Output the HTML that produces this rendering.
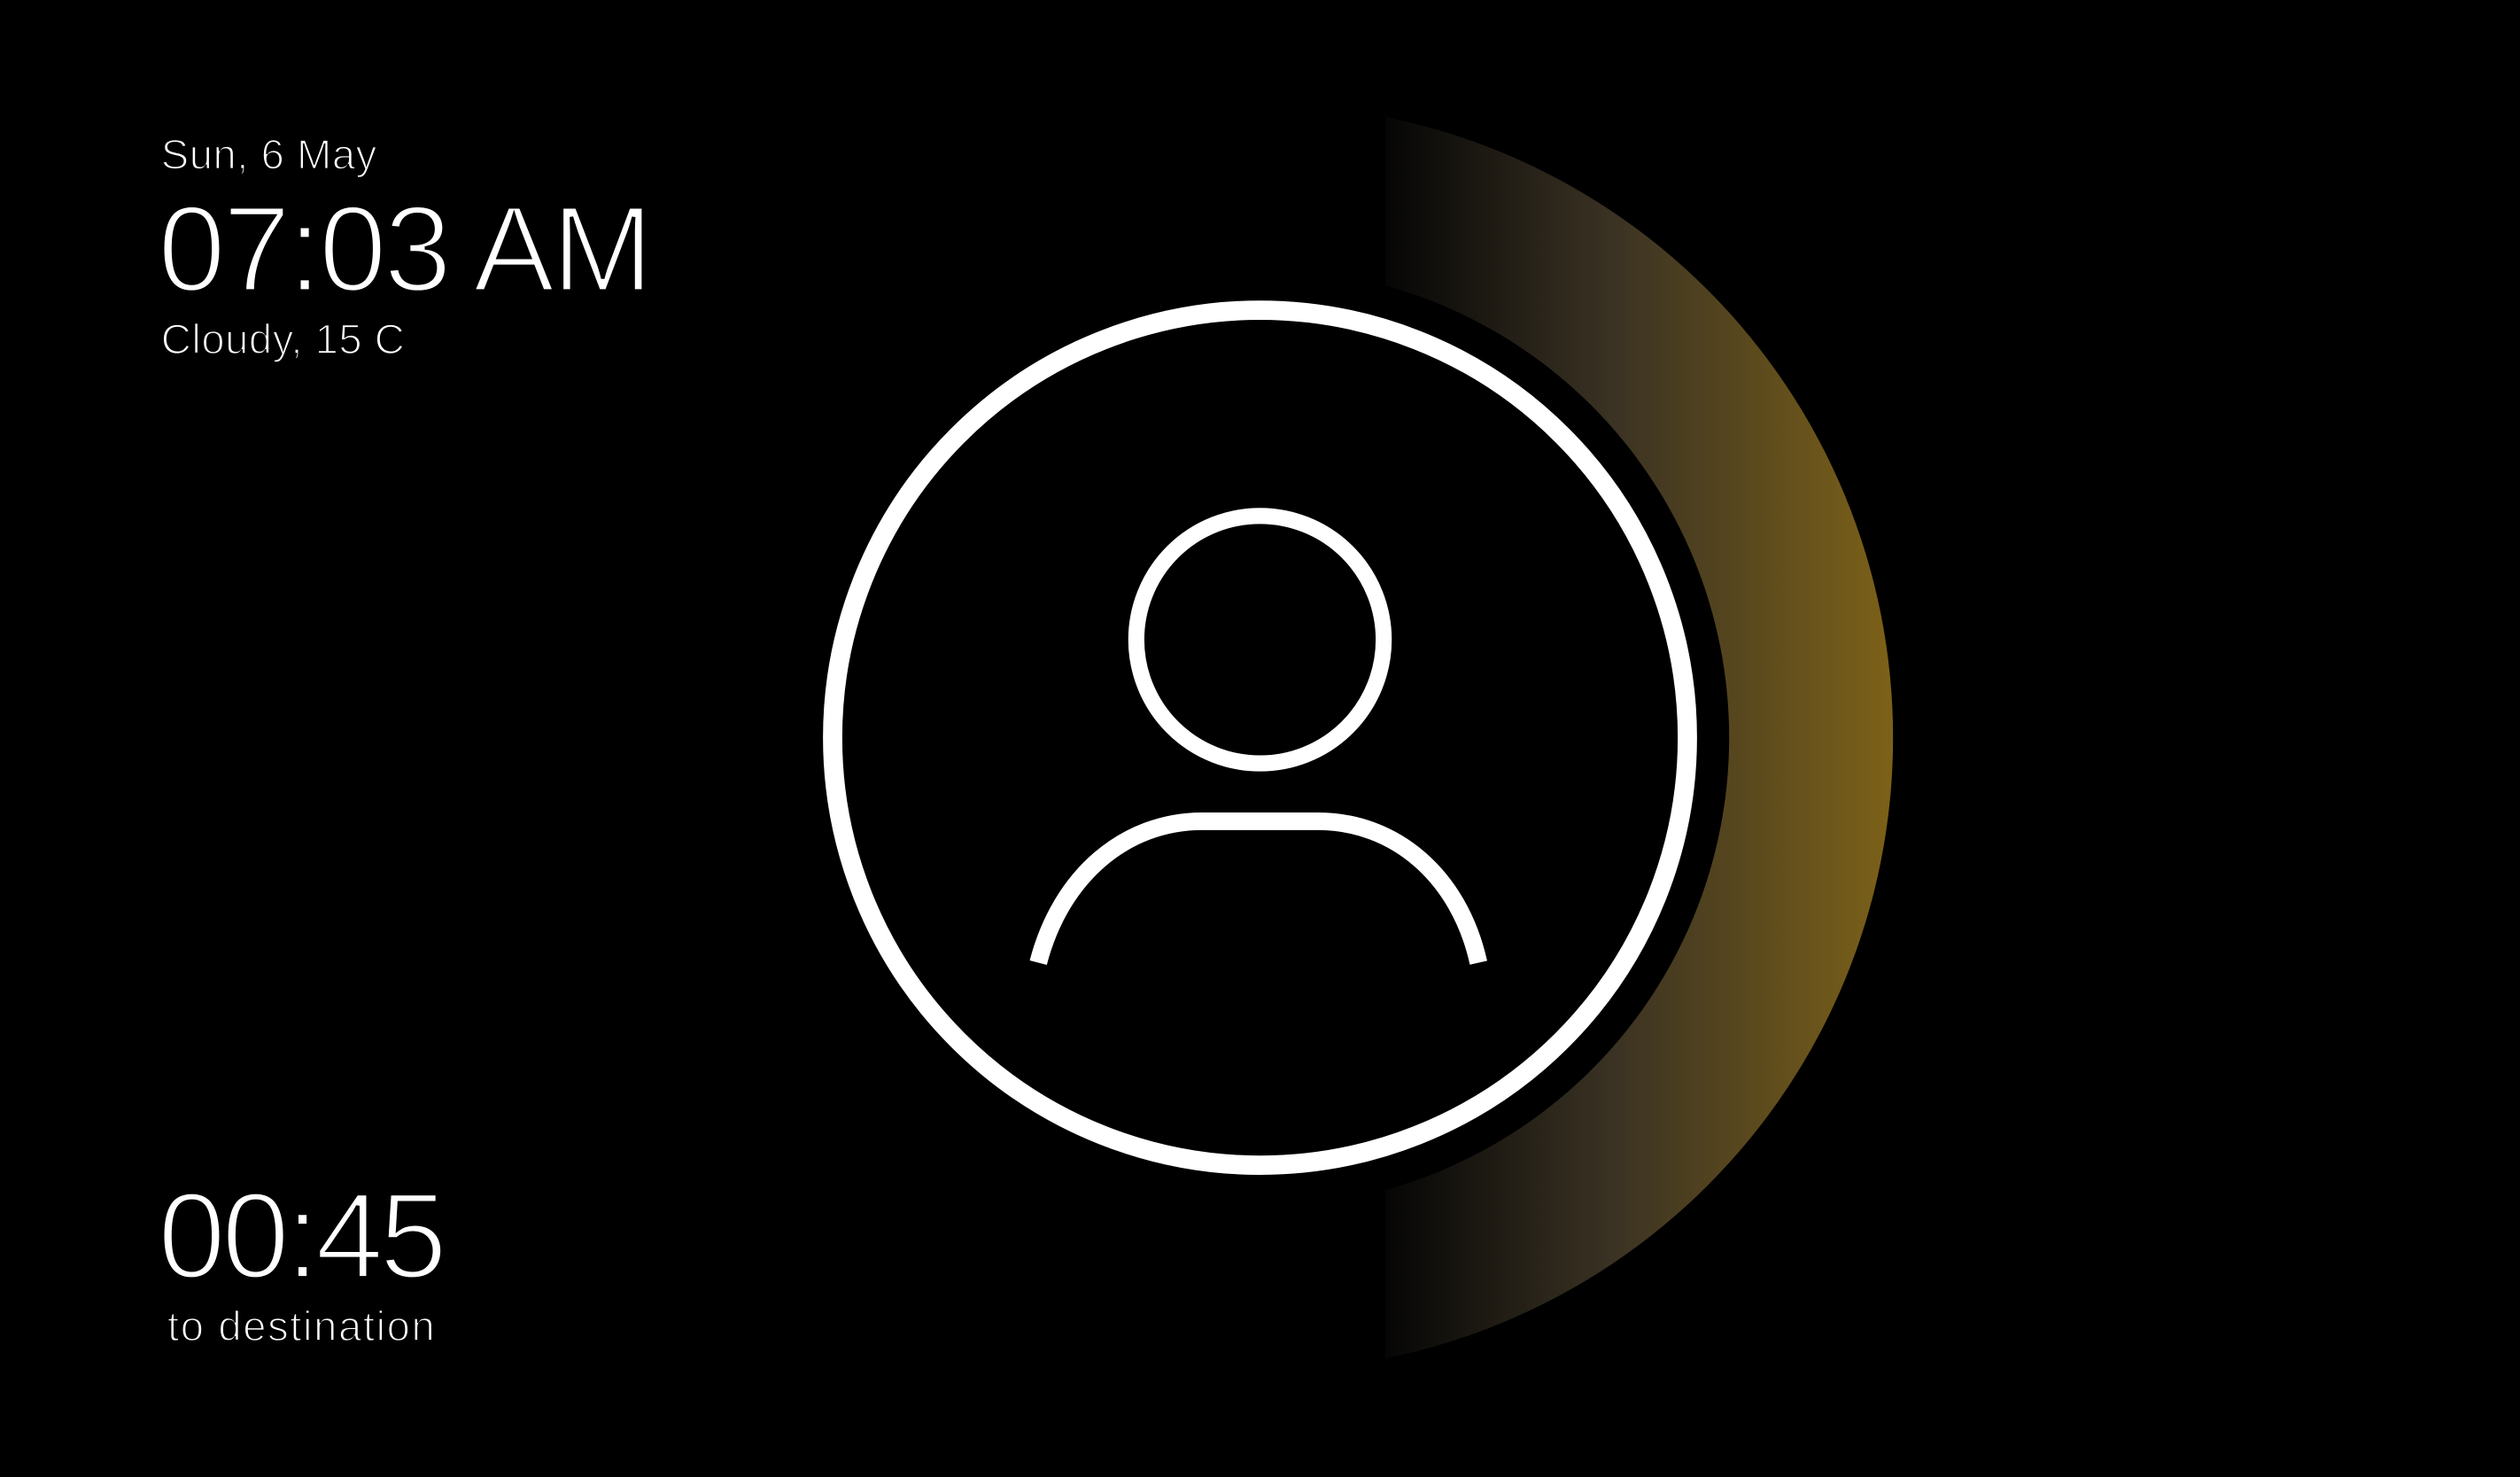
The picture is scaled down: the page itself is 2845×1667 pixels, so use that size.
<!DOCTYPE html>
<html><head><meta charset="utf-8"><style>
html,body{margin:0;padding:0;background:#000;width:2845px;height:1667px;overflow:hidden}
svg{display:block}
text{font-family:"Liberation Sans",sans-serif;fill:#fff;stroke:#000;paint-order:normal}
.s{stroke-width:0.9px}
.b{stroke-width:2.2px}
</style></head><body>
<svg width="2845" height="1667" viewBox="0 0 1568 919" xmlns="http://www.w3.org/2000/svg">
<defs>
<linearGradient id="g" x1="860" y1="0" x2="1178" y2="0" gradientUnits="userSpaceOnUse">
<stop offset="0" stop-color="#050505"/>
<stop offset="0.45" stop-color="#3a3223"/>
<stop offset="1" stop-color="#7c6118"/>
</linearGradient>
<clipPath id="c"><rect x="862" y="0" width="400" height="919"/></clipPath>
</defs>
<rect width="1568" height="919" fill="#000"/>
<g clip-path="url(#c)">
<circle cx="784" cy="459" r="394" fill="url(#g)"/>
<circle cx="784" cy="459" r="292" fill="#000"/>
</g>
<circle cx="784" cy="459" r="266" fill="none" stroke="#fff" stroke-width="12"/>
<circle cx="784" cy="398" r="77" fill="none" stroke="#fff" stroke-width="10"/>
<path d="M646,599 C660,545 700,511 748,511 L820,511 C868,511 908,545 920,599" fill="none" stroke="#fff" stroke-width="11"/>
<text class="s" x="100" y="105" font-size="26" letter-spacing="0.3">Sun, 6 May</text>
<text class="b" x="98" y="181" font-size="76" letter-spacing="-1.8">07:03 AM</text>
<text class="s" x="100" y="220" font-size="26" letter-spacing="0.3">Cloudy, 15 C</text>
<text class="b" x="98" y="795" font-size="76" letter-spacing="-2.5">00:45</text>
<text class="s" x="104" y="834" font-size="26" letter-spacing="0.9">to destination</text>
</svg>
</body></html>
